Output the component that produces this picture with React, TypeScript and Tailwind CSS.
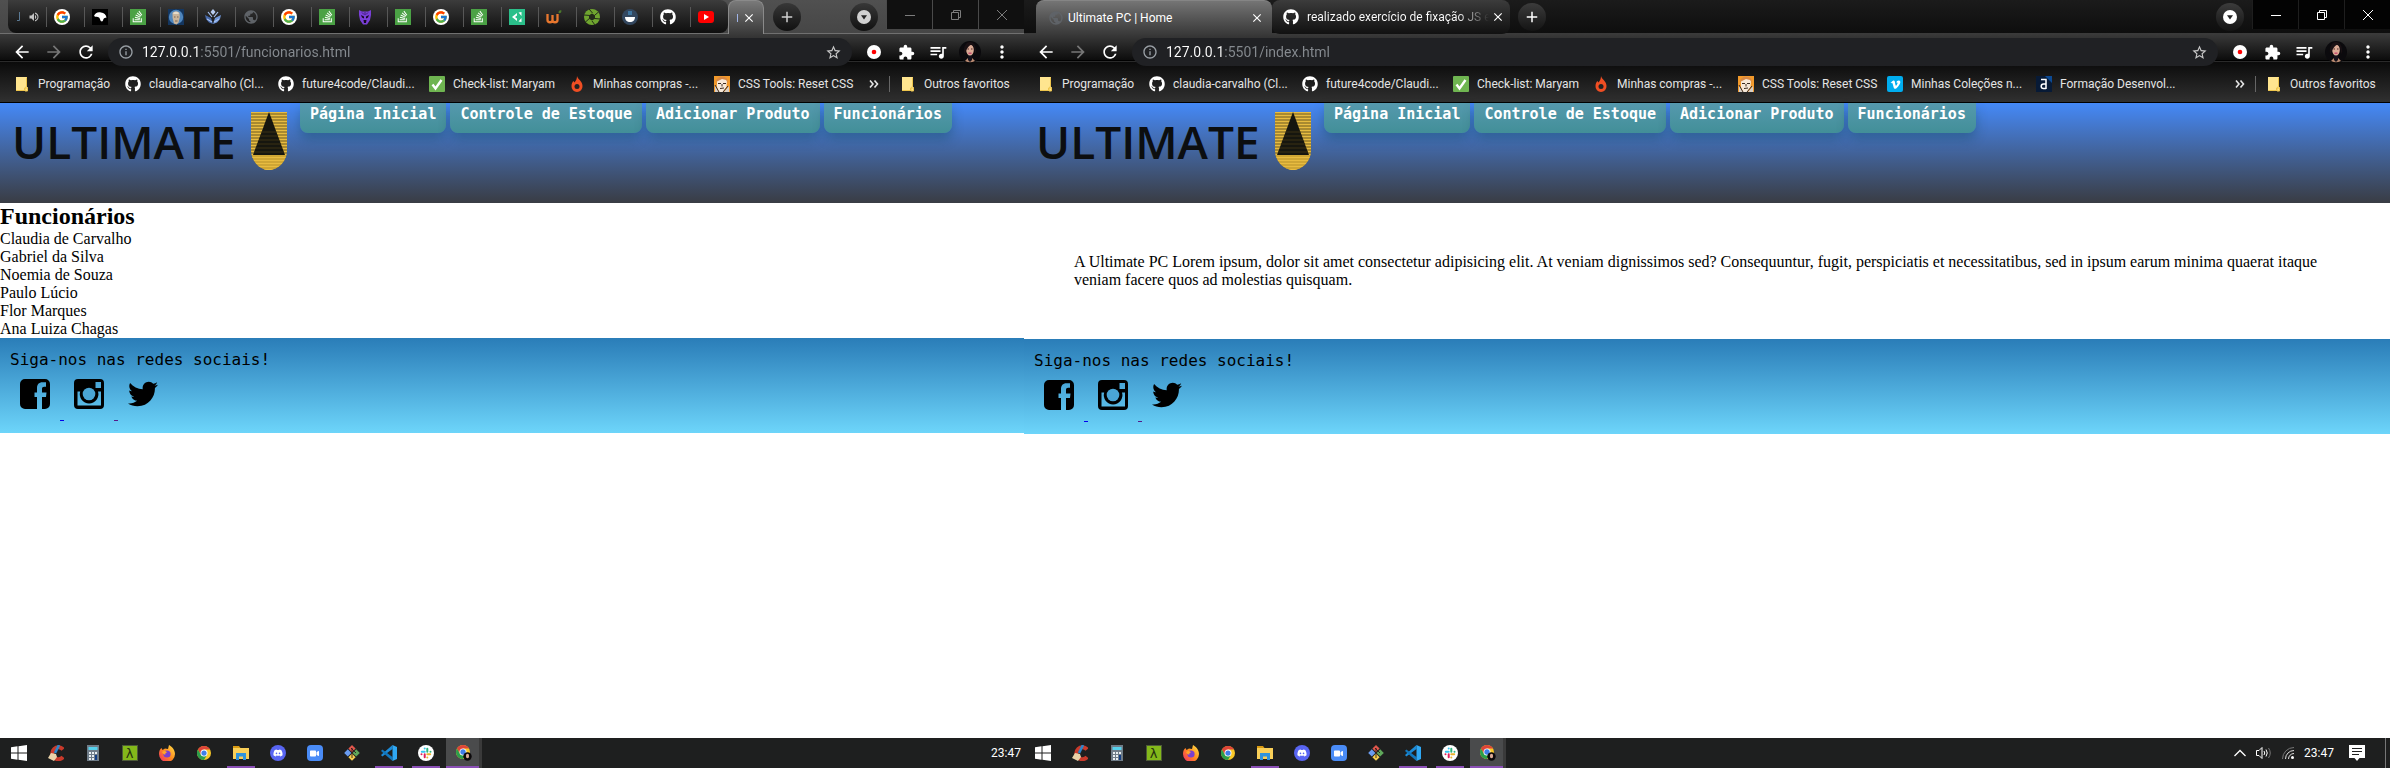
import React from "react";
import { FcGoogle } from "react-icons/fc";
import {
  FaGithub, FaStackOverflow, FaDiscord, FaVimeoV, FaTwitter, FaVideo,
} from "react-icons/fa";
import {
  MdArrowBack, MdArrowForward, MdRefresh, MdInfoOutline, MdStarBorder, MdExtension, MdQueueMusic,
  MdMoreVert, MdVolumeUp, MdPublic, MdClose, MdAdd,
} from "react-icons/md";

/* ---------- favicons ---------- */

const Google = () => (
  <span className="flex size-4 items-center justify-center rounded-full bg-white"><FcGoogle size={14} /></span>
);
const Stack = () => (
  <span className="flex size-4 items-center justify-center bg-[#4ba245] text-white"><FaStackOverflow size={13} /></span>
);
const Bird = () => (
  <svg className="size-4" viewBox="0 0 16 16">
    <rect width="16" height="16" fill="#000" />
    <path d="M2 7c1-3 4-4.500 7-3.500 3 .5 5 2 5.500 5-1.500.5-2 .2-3 1.500-.5 1-.3 2-1.500 2.500-2-.2-1.500-2.500-3-4-1.500-.8-3-.3-5-1.500z" fill="#fff" />
  </svg>
);
const Portrait = () => (
  <svg className="size-4" viewBox="0 0 16 16">
    <rect width="16" height="16" fill="#14365f" />
    <circle cx="8" cy="8" r="7.200" fill="#4f86bd" />
    <path d="M4.500 4c1-2 6-2 7 0l.3 4-1.300 5.500-2 2-2.500-1L4.600 9z" fill="#c9b49a" />
    <path d="M5 4.500c1-2.500 5-2.500 6 0L10 5H6z" fill="#e6dccb" />
    <path d="M6 8h1.500M9 8h1.500M7 12h2.500" stroke="#7b6552" />
  </svg>
);
const Crest = () => (
  <svg className="size-4" viewBox="0 0 16 16">
    <path d="M8 0l2.500 3L8 6 5.500 3z" fill="#b9cdf0" />
    <path d="M0 6l6 3 2 6-4-1.500L1 10z" fill="#4668a8" />
    <path d="M16 6l-6 3-2 6 4-1.500 3-3.500z" fill="#6f96d8" />
    <path d="M3 3l4 5M13 3L9 8M2 10l5 3M14 10l-5 3" stroke="#a9c3f2" strokeWidth="1.200" />
  </svg>
);
const Globe = () => <MdPublic size={16} className="shrink-0 text-[#5f6368]" />;
const Panther = () => (
  <svg className="size-4" viewBox="0 0 16 16">
    <path d="M2 1l3 1.500h6L14 1v5l-1 5-3 4.500H6L3 11 2 6z" fill="#7a3fd8" />
    <path d="M4 6l3 1.500v2L5 8.500zM12 6L9 7.500v2l2-1zM6.500 11h3l-.5 3H7z" fill="#15091f" />
    <path d="M5 3.500l2 2M11 3.500l-2 2M8 3v3" stroke="#2a1450" strokeWidth=".7" />
  </svg>
);
const Unity = () => (
  <svg className="size-4" viewBox="0 0 16 16">
    <rect width="16" height="16" fill="#2bbf8a" />
    <path d="M3 8l5-4v2.500L6 8l2 1.500V12z" fill="#fff" />
    <path d="M9.500 3.500l3-.5v4zM9.500 12.500l3 .5V9z" fill="#fff" />
  </svg>
);
const Wix = () => (
  <svg className="size-4" viewBox="0 0 16 16">
    <path d="M1.500 5v6c0 3 5 3 5 0V6v5c0 3 5 3 5 0V5" fill="none" stroke="#e8772e" strokeWidth="2.300" />
    <path d="M12.500 4c0-2 1-3 3-2.500 0 2-1 3-3 2.500z" fill="#4b7a2b" />
  </svg>
);
const Aperture = () => (
  <svg className="size-4" viewBox="0 0 16 16">
    <circle cx="8" cy="8" r="8" fill="#6fa52f" />
    <path d="M8 4.500l3 1.700v3.600L8 11.500 5 9.800V6.200z" fill="#242b1a" />
    <path d="M5 0l3.500 4M14.500 3l-3.500 3M16 10l-5-.5M11 16l-3-4M1.500 13L5 9.800M0 6l5 .4" stroke="#242b1a" />
  </svg>
);
const Coffee = () => (
  <svg className="size-4" viewBox="0 0 16 16">
    <circle cx="8" cy="8" r="8" fill="#33475f" />
    <path d="M3 8h10c0 3-2 5-5 5S3 11 3 8z" fill="#fff" />
    <path d="M7 2v4M9 2v4" stroke="#4ca5e0" />
  </svg>
);
const Github = () => <FaGithub size={16} className="text-white" />;
const Youtube = () => (
  <span className="flex h-3 w-4 items-center justify-center rounded-[3px] bg-[#f00]">
    <svg className="size-1.5" viewBox="0 0 6 6"><path d="M1 0l5 3-5 3z" fill="#fff" /></svg>
  </span>
);
const Folder = () => (
  <svg className="size-4" viewBox="0 0 16 16">
    <path d="M2 1h11v10l1 .5V15H2z" fill="#ffe58f" />
    <path d="M2 14.500h8.500V12l2-1.500V1.500M11 15v-3h2.500v3z" fill="none" stroke="#eec54c" />
  </svg>
);
const Check = () => (
  <svg className="size-4" viewBox="0 0 16 16">
    <rect width="16" height="16" rx="1" fill="#6fb551" />
    <path d="M3.500 8.500l3 4L12.500 4" fill="none" stroke="#fff" strokeWidth="2.400" />
  </svg>
);
const Flame = () => (
  <svg className="size-4" viewBox="0 0 16 16">
    <path d="M8 0c.5 3 5.500 5 5.500 10A5.600 5.600 0 0 1 8 16a5.600 5.600 0 0 1-5.500-6C2.500 7.500 3.500 6 4.500 5l.8 1.500C7 5 8 3 8 0z" fill="#f04e23" />
    <circle cx="8" cy="10.500" r="2.500" fill="#222" />
  </svg>
);
const Comic = () => (
  <svg className="size-4" viewBox="0 0 16 16">
    <rect width="16" height="16" fill="#f39a2b" />
    <path d="M3 4c2-3 8-3 10 0l-.5 7L9 16H5l-2-5z" fill="#f7e8d8" />
    <path d="M1 9l4 7H1zM15 10l-5 6h5z" fill="#d8cfc6" />
    <path d="M2 6c0-4 4-6 8-5 3 .5 4 3 4 6l-2-3-4-1-4 2z" fill="#d98a45" />
    <path d="M4 7.500h3M9 7.500h3M8 8v2.500M6 12.500l4-.5M1 9l4 7M14 10l-5 6" stroke="#3a2a20" />
  </svg>
);
const Vimeo = () => (
  <span className="flex size-4 items-center justify-center rounded-[2px] bg-[#00adef] text-white"><FaVimeoV size={11} /></span>
);
const Alura = () => (
  <svg className="size-4" viewBox="0 0 16 16">
    <rect width="16" height="16" fill="#071a36" />
    <path d="M9 0h7v7z" fill="#0c4a94" />
    <path d="M5 3.500h5V13M10 8H7.500a2.300 2.300 0 1 0 0 4.600H10" fill="none" stroke="#fff" strokeWidth="1.500" />
  </svg>
);
const Avatar = () => (
  <svg className="size-[22px]" viewBox="0 0 22 22">
    <circle cx="11" cy="11" r="11" fill="#0b0a0d" />
    <path d="M6 20l3-3h4l3 3a11 11 0 0 1-10 0z" fill="#b98a70" />
    <path d="M9 14h4v5l-2 2-2-2z" fill="#14101a" />
    <ellipse cx="11" cy="9" rx="3.800" ry="5.500" fill="#dcab96" />
    <path d="M5 13c-1-9 3-12 6-12s7 3 6 12c-2-3-1-8-4-9.500C9 4 8 9 5 13z" fill="#1a1114" />
    <path d="M8.500 8h1.500M12 8h1.500" stroke="#4a2b28" />
    <path d="M9.500 12.200h3" stroke="#c3416c" strokeWidth="1.300" />
  </svg>
);

/* ---------- browser chrome ---------- */

type Icon = () => React.JSX.Element;

const smallTabs: [string, Icon][] = [
  ["Google", Google], ["Pássaro", Bird], ["Stack Overflow", Stack], ["Retrato", Portrait], ["Brasão", Crest],
  ["Site", Globe], ["Google", Google], ["Stack Overflow", Stack], ["Pantera", Panther], ["Stack Overflow", Stack],
  ["Google", Google], ["Stack Overflow", Stack], ["Unity", Unity], ["W", Wix], ["Obturador", Aperture],
  ["Café", Coffee], ["GitHub", Github], ["YouTube", Youtube],
];

const bookmarks: [string, Icon, string][] = [
  ["Programação", Folder, "w-[111px]"],
  ["claudia-carvalho (Cl...", Github, "w-[153px]"],
  ["future4code/Claudi...", Github, "w-[151px]"],
  ["Check-list: Maryam", Check, "w-[140px]"],
  ["Minhas compras -...", Flame, "w-[145px]"],
  ["CSS Tools: Reset CSS", Comic, "w-[149px]"],
  ["Minhas Coleções n...", Vimeo, "w-[149px]"],
  ["Formação Desenvol...", Alura, "w-[153px]"],
];

function WindowButtons({ dim }: { dim?: boolean }) {
  const cls = dim
    ? "flex w-[46px] items-center justify-center border-l border-[#4a4a4a] bg-[#101010] text-[#7c7c7c]"
    : "flex w-[46px] items-center justify-center border-l border-[#1e1e1e] bg-[#030303] text-white";
  return (
    <div className="flex h-[29px] shrink-0 self-start">
      <button aria-label="Minimizar" className={cls}>
        <svg className="size-2.5" viewBox="0 0 10 10"><path d="M0 5.500h10" stroke="currentColor" /></svg>
      </button>
      <button aria-label="Restaurar" className={cls}>
        <svg className="size-2.5" viewBox="0 0 10 10"><path d="M.5 2.500h7v7h-7zM2.500 2.500v-2h7v7h-2" fill="none" stroke="currentColor" /></svg>
      </button>
      <button aria-label="Fechar" className={cls}>
        <svg className="size-2.5" viewBox="0 0 10 10"><path d="M0 0l10 10M10 0L0 10" stroke="currentColor" /></svg>
      </button>
    </div>
  );
}

function RoundButton({ label, dim, children }: { label: string; dim?: boolean; children: React.ReactNode }) {
  return (
    <button
      aria-label={label}
      className={
        dim
          ? "flex size-7 shrink-0 items-center justify-center rounded-full bg-linear-to-b from-[#383838] to-[#111] text-[#d0d0d0]"
          : "flex size-7 shrink-0 items-center justify-center rounded-full bg-linear-to-b from-[#3c3c3c] to-[#141414] text-white"
      }
    >
      {children}
    </button>
  );
}

const SearchTabs = () => (
  <svg className="size-3.5" viewBox="0 0 14 14">
    <circle cx="7" cy="7" r="7" fill="currentColor" />
    <path d="M4 5.200h6L7 9.500z" fill="#222" />
  </svg>
);

function Toolbar({ url, id }: { url: string; id: string }) {
  const btn = "flex w-8 shrink-0 items-center justify-center";
  return (
    <div className="flex h-8 items-start px-1.5 pt-1">
      <div className="flex h-7 shrink-0 text-white">
        <button aria-label="Voltar" className={btn}><MdArrowBack size={20} /></button>
        <button aria-label="Avançar" className={`${btn} text-[#777]`}><MdArrowForward size={20} /></button>
        <button aria-label="Recarregar" className={btn}><MdRefresh size={20} /></button>
      </div>
      <div className="mx-1.5 flex h-7 min-w-0 flex-1 items-center rounded-full bg-[#202124] px-2.5 text-[#9aa0a6]">
        <MdInfoOutline size={16} className="shrink-0" />
        <label htmlFor={id} className="sr-only">Endereço</label>
        <input
          id={id}
          defaultValue={url}
          className="ml-2 min-w-0 flex-1 bg-[linear-gradient(90deg,#fff_58px,#868b90_58px)] bg-clip-text text-[14px] leading-5 text-transparent outline-none"
        />
        <button aria-label="Favoritar" className="text-[#c8c8c8]"><MdStarBorder size={17} /></button>
      </div>
      <div className="flex h-7 shrink-0 text-white">
        <button aria-label="Gravador" className={btn}>
          <svg className="size-3.5" viewBox="0 0 14 14"><circle cx="7" cy="7" r="7" fill="#fff" /><circle cx="7" cy="7" r="2.300" fill="#f00" /></svg>
        </button>
        <button aria-label="Extensões" className={btn}><MdExtension size={17} /></button>
        <button aria-label="Mídia" className={btn}><MdQueueMusic size={20} /></button>
        <button aria-label="Perfil" className={btn}><Avatar /></button>
        <button aria-label="Menu" className={btn}><MdMoreVert size={20} /></button>
      </div>
    </div>
  );
}

function Bookmarks({ count }: { count: number }) {
  return (
    <div className="flex h-9 items-center pr-[13px] pl-3.5 text-[12px] leading-4 text-[#e4e4e4]">
      {bookmarks.slice(0, count).map(([label, I, w]) => (
        <a key={label} href="#" className={`flex shrink-0 items-center gap-2 whitespace-nowrap [&>svg]:shrink-0 ${w}`}><I />{label}</a>
      ))}
      <button aria-label="Mais favoritos" className="ml-auto">
        <svg className="h-2 w-2.5" viewBox="0 0 10 8"><path d="M1 .5L4 4 1 7.500M5.500 .5l3 3.500-3 3.500" fill="none" stroke="#e4e4e4" strokeWidth="1.600" /></svg>
      </button>
      <span className="mr-2.5 ml-2.5 h-4 w-px bg-[#666]" />
      <a href="#" className="flex w-[111px] shrink-0 items-center gap-2 whitespace-nowrap [&>svg]:shrink-0"><Folder />Outros favoritos</a>
    </div>
  );
}

function Chrome({ url, id, count, children }: { url: string; id: string; count: number; children: React.ReactNode }) {
  return (
    <div className="h-[103px] border-b border-black">
      {children}
      <div className="bg-[linear-gradient(180deg,#3a3a3a_0,#0c0c0c_26px,#000_26px,#000_27px,#2a2a2a_27px,#2a2a2a_28px,#0b0b0b_28px,#303030_100%)]">
        <Toolbar url={url} id={id} />
        <Bookmarks count={count} />
      </div>
    </div>
  );
}

function LeftTabs() {
  return (
    <div className="flex h-[34px] items-center border-b border-[#707070] bg-linear-to-b from-[#505050] to-[#464646] pl-2">
      <div className="flex h-full w-[720px] rounded-r-lg rounded-bl-lg bg-linear-to-b from-[#3c3c3c] to-[#0f0f0f]">
        <button aria-label="Som" className="flex flex-1 items-center text-[#c4c4c4]">
          <svg className="ml-2 h-2.5 w-1" viewBox="0 0 4 10"><path d="M3.500 0v8.500H1" fill="none" stroke="#5b7a94" /></svg>
          <MdVolumeUp size={12} className="ml-2" />
        </button>
        {smallTabs.map(([label, I], i) => (
          <button key={i} aria-label={label} className="flex flex-1 items-center">
            <span className="h-5 w-px bg-[#575757]" />
            <span className="ml-[7px]"><I /></span>
          </button>
        ))}
      </div>
      <button aria-label="Funcionários" className="-mb-px flex h-[34px] w-9 items-center gap-1 rounded-t-lg border-x border-t border-[#8a8a8a] bg-linear-to-b from-[#7a7a7a] to-[#3a3a3a] pl-2 text-white">
        <span className="h-2 w-px bg-[#a0b4e8]" />
        <MdClose size={14} />
      </button>
      <div className="ml-[9px] flex"><RoundButton label="Nova guia" dim><MdAdd size={18} /></RoundButton></div>
      <div className="mr-2 ml-auto flex"><RoundButton label="Pesquisar guias" dim><SearchTabs /></RoundButton></div>
      <WindowButtons dim />
    </div>
  );
}

function RightTabs() {
  return (
    <div className="flex h-[34px] items-center border-b border-[#3a3a3a] bg-linear-to-b from-[#1b1b1b] to-[#0e0e0e] pl-3">
      <button className="-mb-px flex h-[34px] w-[236px] items-center rounded-t-lg border-t border-[#858585] bg-linear-to-b from-[#757575] to-[#3a3a3a] pr-2 pl-3 text-[12px] text-white">
        <Globe />
        <span className="ml-1 flex-1 text-left">Ultimate PC | Home</span>
        <MdClose size={14} />
      </button>
      <button className="flex h-[34px] w-[238px] items-center rounded-lg bg-linear-to-b from-[#3c3c3c] to-[#111] pr-2 pl-[11px] text-[12px] text-white">
        <FaGithub size={16} className="shrink-0" />
        <span className="ml-2 flex-1 bg-[linear-gradient(90deg,#fff_150px,transparent_182px)] bg-clip-text text-left whitespace-nowrap text-transparent">
          realizado exercício de fixação JS e
        </span>
        <MdClose size={14} className="shrink-0" />
      </button>
      <div className="ml-2 flex"><RoundButton label="Nova guia"><MdAdd size={18} /></RoundButton></div>
      <div className="mr-2 ml-auto flex"><RoundButton label="Pesquisar guias"><SearchTabs /></RoundButton></div>
      <WindowButtons />
    </div>
  );
}

/* ---------- site ---------- */

const Shield = () => (
  <svg className="h-[58px] w-9 shrink-0" viewBox="0 0 36 58">
    <defs>
      <clipPath id="shield"><path d="M0 0h36v38c0 11-9 20-18 20S0 49 0 38z" /></clipPath>
      <pattern id="lines" width="36" height="3" patternUnits="userSpaceOnUse"><path d="M0 .5h36" stroke="#e8bc40" /></pattern>
    </defs>
    <g clipPath="url(#shield)">
      <path d="M0 0h36v58H0z" fill="#a98a30" />
      <path d="M0 43h36v15H0z" fill="#cfa634" />
      <path d="M0 0h36v58H0z" fill="url(#lines)" />
      <path d="M18 0l16 43H2z" fill="#16160f" />
      <path d="M11 20h14M9 24h18M8 28h20M6 32h24M5 36h26M3 40h30" stroke="#3a3115" />
    </g>
  </svg>
);

function SiteHeader() {
  return (
    <header className="flex h-[100px] items-start bg-linear-to-b from-[#4489f8] to-[#393c44] pl-3">
      <div className="flex w-[288px] shrink-0 items-center pt-2">
        <span className="w-[239px] font-['Open_Sans',sans-serif] text-[46px] leading-[60px] font-semibold text-[#0c0e10]">ULTIMATE</span>
        <Shield />
      </div>
      <nav className="flex gap-1 font-['DejaVu_Sans_Mono',monospace] text-[15px] leading-[22px] font-bold whitespace-nowrap text-white">
        {["Página Inicial", "Controle de Estoque", "Adicionar Produto", "Funcionários"].map((t) => (
          <a key={t} href="#" className="rounded-b-lg bg-linear-to-b from-[#5599ae] to-[#428f98] px-2.5 pb-2 shadow-[0_6px_12px_rgba(0,60,60,0.3)]">{t}</a>
        ))}
      </nav>
    </header>
  );
}

function SiteFooter() {
  return (
    <footer className="bg-linear-to-b from-[#2a7db8] to-[#6dd5fa] px-2.5 pt-3 pb-2.5 font-['Liberation_Serif',serif] text-[16px] leading-[18px] text-black">
      <p className="font-['DejaVu_Sans_Mono',monospace] leading-[19px]">Siga-nos nas redes sociais!</p>
      <div className="whitespace-pre">
        <a href="#" aria-label="Facebook" className="text-[#0000ee] underline">
          <svg className="inline-block h-[50px] w-[50px] p-2.5 align-baseline" viewBox="0 0 30 30">
            <path fillRule="evenodd" fill="#000" d="M5 0h20a5 5 0 0 1 5 5v20a5 5 0 0 1-5 5h-3V18h4l.5-4.500H22V10c0-1.500.7-2.200 2.200-2.200H26V3.200h-3.500c-3.800 0-5.500 2.300-5.500 5.800v4.500h-2.500V18H17v12H5a5 5 0 0 1-5-5V5a5 5 0 0 1 5-5z" />
          </svg>{" "}
        </a>
        <a href="#" aria-label="Instagram" className="text-[#551a8b] underline">
          <svg className="inline-block h-[50px] w-[50px] p-2.5 align-baseline" viewBox="0 0 30 30">
            <path fillRule="evenodd" fill="#000" d="M4 0h22a4 4 0 0 1 4 4v22a4 4 0 0 1-4 4H4a4 4 0 0 1-4-4V4a4 4 0 0 1 4-4zM21.500 3v6h5.500V3zM3.500 12.500V26.500h23.500V12.500h-3a9.300 9.300 0 1 1-17.800 0z" />
            <circle cx="15" cy="15" r="6.300" fill="#4aa5d5" />
          </svg>{" "}
        </a>
        <a href="#" aria-label="Twitter">
          <FaTwitter className="inline-block h-[50px] w-[50px] p-2.5 align-baseline" />
        </a>
      </div>
    </footer>
  );
}

/* ---------- taskbar ---------- */

const Windows = () => (
  <svg className="size-4" viewBox="0 0 16 16"><path d="M0 2.300L6.500 1.300v6.200H0zM7.500 1.200L16 0v7.500H7.500zM0 8.500h6.500v6.200L0 13.700zM7.500 8.500H16V16l-8.500-1.200z" fill="#fff" /></svg>
);
const Cleaner = () => (
  <svg className="size-4" viewBox="0 0 16 16">
    <path d="M15 4.500A6 6 0 1 0 15 12" fill="none" stroke="#c93a2b" strokeWidth="4" />
    <path d="M11 0L7 8" stroke="#2f86c9" strokeWidth="2.600" />
    <path d="M3 8l5 1 1 3-3 4-6-3z" fill="#ead2a8" />
  </svg>
);
const Calculator = () => (
  <svg className="size-4" viewBox="0 0 16 16">
    <path d="M2 0h12v16H2z" fill="#6f7c88" />
    <path d="M3.500 2h9v3h-9z" fill="#57d2ee" />
    <path d="M4 7h2v2H4zM7 7h2v2H7zM10 7h2v2h-2zM4 10h2v2H4zM7 10h2v2H7zM4 13h2v2H4zM7 13h2v2H7z" fill="#e8eef2" />
    <path d="M10 10h2v5h-2z" fill="#143f86" />
  </svg>
);
const Lambda = () => (
  <span className="flex size-4 items-center justify-center border border-[#4d5a38] bg-[#83b81a] font-['DejaVu_Sans',sans-serif] text-[13px] leading-none text-[#26300e]">λ</span>
);
const Firefox = () => (
  <svg className="size-4" viewBox="0 0 16 16">
    <defs><linearGradient id="fx" x1="1" y1="0" x2="0" y2="1"><stop offset="0" stopColor="#ffe64a" /><stop offset=".5" stopColor="#ff8a1e" /><stop offset="1" stopColor="#f0246e" /></linearGradient></defs>
    <path d="M10 0c2 1 6 4 6 9a8 8 0 0 1-16 0c0-3 1-5 2.500-6l1 2L6 3.500 9 4z" fill="url(#fx)" />
    <circle cx="8" cy="9" r="3.600" fill="#7a3fd0" />
    <path d="M3 7c2-1.500 4-1 5 .5-1.500 0-2 1-1.500 2C5 9.500 4 9 3 7z" fill="#ffa52a" />
  </svg>
);
const ChromeLogo = () => (
  <svg className="size-3.5" viewBox="0 0 16 16">
    <circle cx="8" cy="8" r="8" fill="#f9c828" />
    <path d="M1.070 4A8 8 0 0 1 14.930 4H8L4.500 10z" fill="#de4438" />
    <path d="M1.070 4A8 8 0 0 0 8 16l3.500-6-3.500 2-3.500-2z" fill="#2b9e4b" />
    <circle cx="8" cy="8" r="4" fill="#fff" />
    <circle cx="8" cy="8" r="3" fill="#3f7fe8" />
  </svg>
);
const Explorer = () => (
  <svg className="size-4" viewBox="0 0 16 16">
    <path d="M0 1h6l1.500 2H0z" fill="#d99a12" />
    <path d="M0 3h16v11H0z" fill="#f9cf58" />
    <path d="M3 15V8h10v7h-3v-3.500H6V15z" fill="#2f93dc" />
  </svg>
);
const Discord = () => (
  <span className="flex size-4 items-center justify-center rounded-full bg-[#5865f2] text-white"><FaDiscord size={10} /></span>
);
const Zoom = () => (
  <span className="flex size-4 items-center justify-center rounded-[4px] bg-[#4a8cf7] text-white"><FaVideo size={9} /></span>
);
const Git = () => (
  <svg className="size-4" viewBox="0 0 16 16">
    <path d="M8 0l3.600 3.600L8 7.200 4.400 3.600z" fill="#e2574c" />
    <path d="M3.800 4.300l3.600 3.600-3.600 3.600L.2 7.900z" fill="#6a9cf0" />
    <path d="M12.200 4.300l3.600 3.600-3.600 3.600-3.600-3.600z" fill="#5fa85b" />
    <path d="M8 8.600l3.600 3.600L8 15.800l-3.600-3.600z" fill="#f5cf4f" />
    <path d="M7 3l5 5M8 3v10" stroke="#2a1c1c" strokeWidth=".9" />
  </svg>
);
const Code = () => (
  <svg className="size-4" viewBox="0 0 16 16">
    <path d="M11.500 0v4L1.300 11.500 0 10z" fill="#1c8bd8" />
    <path d="M11.500 16v-4L1.300 4.500 0 6z" fill="#1277bd" />
    <path d="M11.500 0L16 2v12l-4.500 2z" fill="#2fa8f4" />
  </svg>
);
const Slack = () => (
  <svg className="size-4" viewBox="0 0 16 16">
    <circle cx="8" cy="8" r="8" fill="#fff" />
    <g strokeWidth="2" strokeLinecap="round">
      <path d="M6.700 3.500v0M3.800 6.700h2.900" stroke="#36c5f0" />
      <path d="M9.300 3.800v2.900M12.500 6.700v0" stroke="#2eb67d" />
      <path d="M9.300 9.300h2.900M9.300 12.500v0" stroke="#ecb22e" />
      <path d="M6.700 9.300v2.900M3.500 9.300v0" stroke="#e01e5a" />
    </g>
  </svg>
);
const ChromeUser = () => (
  <svg className="size-4" viewBox="0 0 16 16">
    <circle cx="7" cy="7" r="7" fill="#f9c828" />
    <path d="M.94 3.500A7 7 0 0 1 13.060 3.500H7L4 8.800z" fill="#de4438" />
    <path d="M.94 3.500A7 7 0 0 0 7 14l3-5.200-3 1.700-3-1.700z" fill="#2b9e4b" />
    <circle cx="7" cy="7" r="3.500" fill="#fff" />
    <circle cx="7" cy="7" r="2.700" fill="#3f7fe8" />
    <circle cx="11.500" cy="11.500" r="4.200" fill="#0d0a0c" />
    <ellipse cx="11.500" cy="11" rx="1.600" ry="2.300" fill="#dcab96" />
  </svg>
);

const apps: [string, Icon, boolean][] = [
  ["Iniciar", Windows, false], ["CCleaner", Cleaner, false], ["Calculadora", Calculator, false],
  ["Terminal", Lambda, false], ["Firefox", Firefox, false], ["Chrome", ChromeLogo, false],
  ["Explorador", Explorer, true], ["Discord", Discord, false], ["Zoom", Zoom, false],
  ["Git", Git, false], ["Code", Code, true], ["Slack", Slack, true],
];

function Taskbar({ tray }: { tray?: boolean }) {
  return (
    <div className="flex h-[30px] items-stretch bg-[#1e1f1f] text-[12px] text-white">
      {apps.map(([label, I, open]) => (
        <button key={label} aria-label={label} className="flex w-[37px] flex-col items-center">
          <span className="flex flex-1 items-center pt-0.5"><I /></span>
          <span className={open ? "h-0.5 w-7 bg-[#8a4fb5]" : "h-0.5 w-7"} />
        </button>
      ))}
      <button aria-label="Chrome aberto" className="ml-0.5 flex w-9 flex-col items-center border-r-[3px] border-[#3a3a3a] bg-[#4a4b4c]">
        <span className="flex flex-1 items-center pt-0.5 pl-0.5"><ChromeUser /></span>
        <span className="h-0.5 w-full bg-[#8a4fb5]" />
      </button>
      <div className="ml-auto flex items-center">
        {tray && (
          <div className="mr-2.5 flex items-center gap-2.5">
            <svg className="h-2 w-3" viewBox="0 0 12 8"><path d="M.5 7L6 1.500 11.500 7" fill="none" stroke="#fff" strokeWidth="1.300" /></svg>
            <svg className="h-3.5 w-4" viewBox="0 0 16 14">
              <path d="M.5 4.500h2.500L6 1.500v11L3 9.500H.5z" fill="none" stroke="#fff" />
              <path d="M8 5q1.500 2 0 4M10 3.500q2.500 3.500 0 7" fill="none" stroke="#fff" />
              <path d="M12.500 2q3.500 5 0 10" fill="none" stroke="#777" />
            </svg>
            <svg className="size-3" viewBox="0 0 12 12">
              <path d="M.5 12A11.500 11.500 0 0 1 12 .5" fill="none" stroke="#777" />
              <path d="M3.500 12A8.500 8.500 0 0 1 12 3.500M6.500 12A5.500 5.500 0 0 1 12 6.500" fill="none" stroke="#ddd" />
              <circle cx="10.500" cy="10.500" r="1.500" fill="#fff" />
            </svg>
          </div>
        )}
        <time className={tray ? "w-[29px]" : "mr-1 w-[29px]"}>23:47</time>
        {tray && (
          <>
            <button aria-label="Notificações" className="ml-4">
              <svg className="size-4" viewBox="0 0 16 16">
                <path d="M0 0h16v13h-5.500L8 16l-2.500-3H0z" fill="#fff" />
                <path d="M3 3.500h10M3 6.500h10M3 9.500h7" stroke="#1e1f1f" />
              </svg>
            </button>
            <span className="mr-1 ml-5 h-[30px] w-px bg-[#777]" />
          </>
        )}
      </div>
    </div>
  );
}

export default function App() {
  return (
    <div className="grid min-h-screen grid-cols-[1024fr_1366fr] bg-white font-['Roboto',sans-serif]">
      <section className="flex min-w-0 flex-col">
        <Chrome url="127.0.0.1:5501/funcionarios.html" id="url-left" count={6}><LeftTabs /></Chrome>
        <SiteHeader />
        <main className="font-['Liberation_Serif',serif] text-[16px] leading-[18px] text-black">
          <h1 className="text-[24px] leading-[27px] font-bold">Funcionários</h1>
          <ul>
            {["Claudia de Carvalho", "Gabriel da Silva", "Noemia de Souza", "Paulo Lúcio", "Flor Marques", "Ana Luiza Chagas"].map((n) => (
              <li key={n}>{n}</li>
            ))}
          </ul>
        </main>
        <SiteFooter />
        <div className="flex-1" />
        <Taskbar />
      </section>
      <section className="flex min-w-0 flex-col">
        <Chrome url="127.0.0.1:5501/index.html" id="url-right" count={8}><RightTabs /></Chrome>
        <SiteHeader />
        <main className="p-[50px] font-['Liberation_Serif',serif] text-[16px] leading-[18px] text-black">
          <p>
            A Ultimate PC Lorem ipsum, dolor sit amet consectetur adipisicing elit. At veniam dignissimos sed? Consequuntur, fugit,
            perspiciatis et necessitatibus, sed in ipsum earum minima quaerat itaque veniam facere quos ad molestias quisquam.
          </p>
        </main>
        <SiteFooter />
        <div className="flex-1" />
        <Taskbar tray />
      </section>
    </div>
  );
}
